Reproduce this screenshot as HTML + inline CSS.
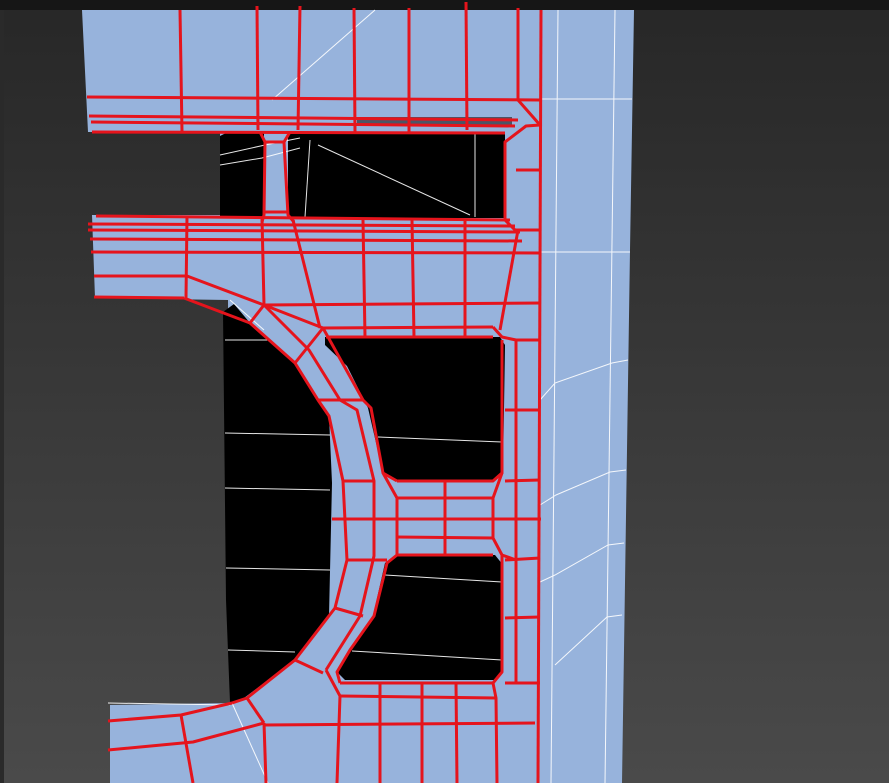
<!DOCTYPE html>
<html><head><meta charset="utf-8"><style>
html,body{margin:0;padding:0;width:889px;height:783px;overflow:hidden;background:#333;}
svg{display:block}
</style></head><body>
<svg width="889" height="783" viewBox="0 0 889 783" xmlns="http://www.w3.org/2000/svg">
<defs>
<linearGradient id="bg" x1="0" y1="0" x2="0" y2="1">
<stop offset="0" stop-color="#272727"/><stop offset="1" stop-color="#4a4a4a"/>
</linearGradient>
</defs>
<rect width="889" height="783" fill="url(#bg)"/>
<rect width="889" height="10" fill="#161616"/>
<rect width="4" height="783" y="10" fill="#2a2a2a"/>
<polygon fill="#97b3dc" points="82,10 634,10 630,250 622,783 110,783 110,705 230,703 228,300 95,298 92,215 220,215 220,132 88,132"/>
<g fill="#000">
<polygon points="223,312 234,304 250,323 295,363 318,400 329,416 332,483 329,616 295,660 244,698 230,703 226,600"/>
<polygon points="220,136 228,132 505,132 505,218 220,218"/>
<polygon points="325,337 500,337 505,345 503,472 495,481 395,481 383,473 368,408 347,366 325,345"/>
<polygon points="397,555 495,555 503,565 502,672 495,680 345,680 337,672 350,650 373,616 385,563"/>
</g>
<rect x="264" y="132" width="24" height="86" fill="#97b3dc"/>
<rect x="357" y="117" width="155" height="8" fill="#4c5566"/>
<g stroke="#fff" stroke-width="1" fill="none" opacity="0.9">
<line x1="558" y1="10" x2="551" y2="783"/>
<line x1="615" y1="10" x2="605" y2="783"/>
<line x1="540" y1="99" x2="632" y2="99"/>
<line x1="540" y1="252" x2="630" y2="252"/>
<polyline points="540,400 555,383 612,363 628,360"/>
<polyline points="540,505 556,495 610,472 626,470"/>
<polyline points="540,582 555,575 608,545 624,543"/>
<polyline points="555,665 607,617 622,615"/>
<line x1="272" y1="100" x2="375" y2="10"/>
<line x1="318" y1="145" x2="470" y2="215"/>
<polyline points="220,155 265,145 300,138"/>
<polyline points="220,165 262,158 300,148"/>
<line x1="225" y1="340" x2="268" y2="340"/>
<line x1="225" y1="433" x2="330" y2="435"/>
<line x1="225" y1="488" x2="330" y2="490"/>
<line x1="226" y1="568" x2="330" y2="570"/>
<line x1="228" y1="650" x2="295" y2="652"/>
<line x1="378" y1="437" x2="502" y2="442"/>
<line x1="385" y1="575" x2="502" y2="582"/>
<line x1="352" y1="651" x2="502" y2="660"/>
<line x1="108" y1="703" x2="230" y2="705"/>
<line x1="232" y1="703" x2="268" y2="783"/>
<line x1="475" y1="133" x2="475" y2="217"/>
<line x1="310" y1="140" x2="305" y2="217"/>
<line x1="230" y1="300" x2="264" y2="330"/>
</g>
<g stroke="#e5141c" stroke-width="3" fill="none" stroke-linejoin="round">
<line x1="180" y1="10" x2="182" y2="132"/>
<line x1="257" y1="6" x2="258" y2="130"/>
<line x1="300" y1="6" x2="298" y2="130"/>
<line x1="354" y1="8" x2="355" y2="132"/>
<line x1="409" y1="8" x2="409" y2="132"/>
<line x1="466" y1="2" x2="467" y2="130"/>
<line x1="518" y1="8" x2="518" y2="100"/>
<line x1="541" y1="10" x2="538" y2="783"/>
<line x1="87" y1="97" x2="540" y2="100"/>
<line x1="89" y1="116" x2="518" y2="120"/>
<line x1="91" y1="122" x2="515" y2="126"/>
<line x1="92" y1="132" x2="505" y2="133"/>
<polyline points="518,100 540,125 526,126 505,142 505,220 515,230 540,230"/>
<line x1="516" y1="170" x2="541" y2="170"/>
<polyline points="260,132 265,142 264,215 262,222"/>
<polyline points="290,132 284,142 288,215 294,222"/>
<line x1="265" y1="142" x2="284" y2="142"/>
<line x1="264" y1="212" x2="288" y2="212"/>
<line x1="96" y1="216" x2="510" y2="220"/>
<line x1="88" y1="224" x2="515" y2="226"/>
<line x1="88" y1="230" x2="520" y2="232"/>
<line x1="90" y1="239" x2="522" y2="241"/>
<line x1="91" y1="252" x2="541" y2="253"/>
<line x1="94" y1="276" x2="187" y2="276"/>
<line x1="94" y1="297" x2="184" y2="298"/>
<line x1="187" y1="216" x2="186" y2="298"/>
<polyline points="187,276 264,305 541,303"/>
<polyline points="184,298 250,323"/>
<line x1="262" y1="218" x2="264" y2="305"/>
<line x1="293" y1="220" x2="320" y2="328"/>
<line x1="363" y1="220" x2="365" y2="337"/>
<line x1="412" y1="220" x2="414" y2="337"/>
<line x1="465" y1="220" x2="465" y2="337"/>
<line x1="518" y1="230" x2="500" y2="330"/>
<line x1="323" y1="328" x2="493" y2="327"/>
<line x1="326" y1="337" x2="493" y2="337"/>
<polyline points="493,327 502,337 516,340 541,340"/>
<polyline points="502,340 502,473 493,481 397,481"/>
<line x1="516" y1="340" x2="516" y2="683"/>
<line x1="505" y1="410" x2="540" y2="410"/>
<line x1="505" y1="481" x2="540" y2="480"/>
<line x1="505" y1="560" x2="540" y2="558"/>
<line x1="505" y1="618" x2="540" y2="617"/>
<line x1="505" y1="683" x2="540" y2="683"/>
<polyline points="250,323 295,363 318,400 329,416 343,481 347,560 335,608 295,660 247,698 232,703"/>
<polyline points="264,305 309,350 340,400 357,410 374,481 374,556 360,616 326,670"/>
<polyline points="264,305 323,328 363,400 371,408 383,473 397,481"/>
<line x1="250" y1="323" x2="264" y2="305"/>
<line x1="295" y1="363" x2="323" y2="328"/>
<line x1="318" y1="400" x2="363" y2="400"/>
<line x1="343" y1="481" x2="374" y2="481"/>
<line x1="346" y1="560" x2="387" y2="560"/>
<line x1="335" y1="608" x2="363" y2="616"/>
<line x1="295" y1="660" x2="323" y2="673"/>
<line x1="247" y1="698" x2="264" y2="723"/>
<line x1="397" y1="498" x2="493" y2="498"/>
<line x1="332" y1="519" x2="541" y2="519"/>
<line x1="397" y1="537" x2="493" y2="538"/>
<polyline points="383,473 397,498 397,555 387,563 374,616 350,650 337,672 340,683"/>
<polyline points="502,473 493,498 493,538 502,555 516,560"/>
<line x1="445" y1="481" x2="445" y2="555"/>
<line x1="397" y1="555" x2="493" y2="555"/>
<polyline points="502,555 502,672 493,683 340,683"/>
<line x1="340" y1="696" x2="496" y2="698"/>
<line x1="264" y1="725" x2="535" y2="723"/>
<polyline points="108,721 181,715 232,703"/>
<polyline points="108,750 193,742 264,723"/>
<line x1="181" y1="715" x2="193" y2="783"/>
<line x1="264" y1="723" x2="266" y2="783"/>
<polyline points="326,670 340,696 337,783"/>
<line x1="380" y1="683" x2="380" y2="783"/>
<line x1="422" y1="683" x2="422" y2="783"/>
<line x1="456" y1="683" x2="457" y2="783"/>
<polyline points="493,683 496,698 497,783"/>
</g>
</svg>
</body></html>
